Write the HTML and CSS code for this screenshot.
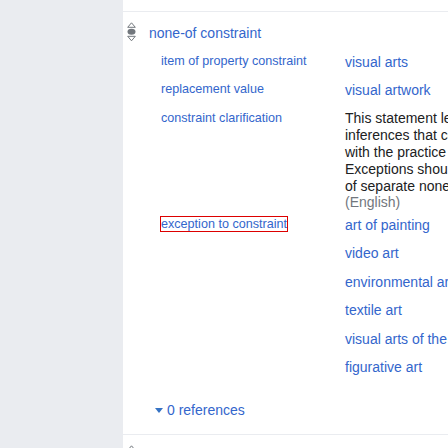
FILE: index.html
```html
<!DOCTYPE html>
<html>
<head>
<meta charset="utf-8">
<link rel="stylesheet" href="styles.css">
</head>
<body>
<div class="page">
  <div class="sidebar"></div>
  <div class="content">
    <div class="prev"></div>
    <div class="statement">
      <div class="rank">
        <svg width="9" height="20" viewBox="0 0 9 20">
          <polygon points="4.5,0.8 8.3,5.3 0.7,5.3" fill="none" stroke="#72777d" stroke-width="1"/>
          <ellipse cx="4.5" cy="9.8" rx="4" ry="3" fill="#72777d"/>
          <polygon points="0.7,14.3 8.3,14.3 4.5,18.8" fill="none" stroke="#72777d" stroke-width="1"/>
        </svg>
      </div>
      <div class="body">
        <div class="mainvalue"><a class="link">none-of constraint</a></div>
        <div class="qualifiers">
          <div class="qgroup">
            <div class="qlabel"><a class="link">item of property constraint</a></div>
            <div class="qvalues"><div class="qv"><a class="link">visual arts</a></div></div>
          </div>
          <div class="qgroup">
            <div class="qlabel"><a class="link">replacement value</a></div>
            <div class="qvalues"><div class="qv"><a class="link">visual artwork</a></div></div>
          </div>
          <div class="qgroup">
            <div class="qlabel"><a class="link">constraint clarification</a></div>
            <div class="qvalues"><div class="qv desc">This statement leads to<br>inferences that conflict<br>with the practice of the project.<br>Exceptions should take the form<br>of separate none-of constraints.<br><span class="lang">(English)</span></div></div>
          </div>
          <div class="qgroup">
            <div class="qlabel"><a class="link outlined">exception to constraint</a></div>
            <div class="qvalues">
              <div class="qv"><a class="link">art of painting</a></div>
              <div class="qv"><a class="link">video art</a></div>
              <div class="qv"><a class="link">environmental art</a></div>
              <div class="qv"><a class="link">textile art</a></div>
              <div class="qv"><a class="link">visual arts of the United States</a></div>
              <div class="qv"><a class="link">figurative art</a></div>
            </div>
          </div>
        </div>
        <div class="refs"><span class="tri"></span><a class="link">0 references</a></div>
      </div>
    </div>
    <div class="statement">
      <div class="rank">
        <svg width="9" height="20" viewBox="0 0 9 20">
          <polygon points="4.5,0.8 8.3,5.3 0.7,5.3" fill="none" stroke="#72777d" stroke-width="1"/>
          <ellipse cx="4.5" cy="9.8" rx="4" ry="3" fill="#72777d"/>
          <polygon points="0.7,14.3 8.3,14.3 4.5,18.8" fill="none" stroke="#72777d" stroke-width="1"/>
        </svg>
      </div>
      <div class="body"></div>
    </div>
  </div>
</div>
</body>
</html>
```
FILE: styles.css
```css
html, body {
  margin: 0;
  padding: 0;
  width: 448px;
  height: 448px;
  overflow: hidden;
  background: #ffffff;
}
.page {
  display: flex;
  height: 448px;
  font-family: "Liberation Sans", Arial, sans-serif;
  font-size: 14px;
  line-height: 16.8px;
  color: #202122;
}
.sidebar {
  width: 123px;
  flex: none;
  background: #eaecf0;
}
.content {
  flex: 1;
  min-width: 0;
  overflow: hidden;
}
.prev {
  height: 11px;
  border-bottom: 1px solid #eaecf0;
}
.statement {
  display: flex;
  padding-left: 4px;
  border-bottom: 1px solid #eaecf0;
}
.rank {
  width: 22px;
  flex: none;
  padding-top: 10px;
}
.rank svg {
  display: block;
}
.body {
  flex: 1;
  min-width: 0;
}
.link {
  color: #3366cc;
  text-decoration: none;
}
.mainvalue {
  padding-top: 13px;
  white-space: nowrap;
}
.qualifiers {
  margin-top: 6px;
  padding-left: 12px;
}
.qgroup {
  display: flex;
}
.qlabel {
  width: 184px;
  flex: none;
  padding-top: 6.3px;
  font-size: 12.6px;
  line-height: 15.12px;
  white-space: nowrap;
}
.qvalues {
  flex: 1;
  min-width: 0;
}
.qv {
  padding: 5.8px 0;
  white-space: nowrap;
}
.qv.desc {
  padding-bottom: 0;
}
.lang {
  color: #72777d;
}
.outlined {
  outline: 1px solid #dd0000;
}
.refs {
  margin-top: 20px;
  padding-left: 6px;
  padding-bottom: 15.6px;
  display: flex;
  align-items: center;
  gap: 4px;
  white-space: nowrap;
}
.tri {
  width: 0;
  height: 0;
  border-left: 4px solid transparent;
  border-right: 4px solid transparent;
  border-top: 5px solid #3673c4;
  margin-top: 1px;
}
```
